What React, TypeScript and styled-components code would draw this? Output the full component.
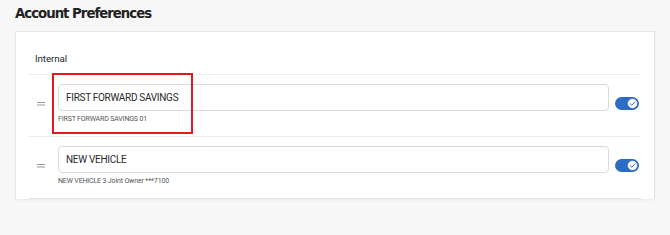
import React from "react";
import styled, { createGlobalStyle } from "styled-components";

const GlobalStyle = createGlobalStyle`
  html, body {
    margin: 0;
    padding: 0;
    background: #f7f7f7;
    font-family: Roboto, "Liberation Sans", Arial, sans-serif;
  }
`;

const Page = styled.div`
  width: 670px;
  height: 235px;
  padding: 5px 15px 0;
  box-sizing: border-box;
  background: #f7f7f7;
`;

const Title = styled.h1`
  margin: 0 0 8px;
  font-family: "DejaVu Sans", sans-serif;
  font-size: 13.3px;
  line-height: 18px;
  font-weight: 700;
  color: #222;
  letter-spacing: -1px;
`;

const Card = styled.div`
  background: #fff;
  border: 1px solid #e6e6e6;
  border-bottom: none;
  box-shadow: 0 1px 2px rgba(0, 0, 0, 0.06);
  padding: 0 13px;
`;

const Header = styled.div`
  padding: 20px 6px 9px;
  font-size: 9.8px;
  line-height: 13px;
  color: #2a2a2a;
  letter-spacing: -0.1px;
`;

const Row = styled.div<{ $last?: boolean }>`
  position: relative;
  display: flex;
  align-items: center;
  border-top: 1px solid #ececec;
  border-bottom: ${(p) => (p.$last ? "1px solid #e4e4e4" : "none")};
  padding: 9px 2px 13px 0;
`;

const Handle = styled.div`
  width: 29px;
  display: flex;
  align-items: center;
  padding-left: 8px;
  box-sizing: border-box;
`;

const Body = styled.div`
  flex: 1;
  display: flex;
  flex-direction: column;
  gap: 4px;
`;

const Input = styled.div`
  height: 27px;
  box-sizing: border-box;
  border: 1px solid #dadada;
  border-radius: 4px;
  padding: 0 7px;
  display: flex;
  align-items: center;
  font-size: 10px;
  color: #2a2a2a;
  letter-spacing: -0.3px;
`;

const Sub = styled.div`
  font-size: 7px;
  line-height: 8px;
  color: #555;
  letter-spacing: -0.15px;
`;

const Toggle = styled.div`
  margin-left: 6px;
  width: 24px;
  height: 13px;
  border-radius: 7px;
  background: #2d6cc5;
  display: flex;
  align-items: center;
  justify-content: flex-end;
  padding-right: 1px;
  box-sizing: border-box;
`;

const Highlight = styled.div`
  position: absolute;
  left: 23px;
  top: -2px;
  width: 141px;
  height: 61px;
  border: 2px solid #e3191f;
  box-sizing: border-box;
  pointer-events: none;
`;

const HandleIcon = () => (
  <svg width="8" height="4" viewBox="0 0 8 4">
    <rect x="0" y="0" width="8" height="1" fill="#9a9a9a" />
    <rect x="0" y="2.5" width="8" height="1" fill="#9a9a9a" />
  </svg>
);

const Knob = () => (
  <svg width="11" height="11" viewBox="0 0 11 11">
    <circle cx="5.5" cy="5.5" r="5" fill="#fff" stroke="#2d6cc5" strokeWidth="0.8" />
    <path d="M3.1 5.6 L4.8 7.2 L7.9 3.9" fill="none" stroke="#2d6cc5" strokeWidth="1" strokeLinecap="round" strokeLinejoin="round" />
  </svg>
);

const accounts = [
  { name: "FIRST FORWARD SAVINGS", detail: "FIRST FORWARD SAVINGS 01", highlight: true },
  { name: "NEW VEHICLE", detail: "NEW VEHICLE 3 Joint Owner ***7100", highlight: false },
];

export default function App() {
  return (
    <>
      <GlobalStyle />
      <Page>
        <Title>Account Preferences</Title>
        <Card>
          <Header>Internal</Header>
          {accounts.map((a, i) => (
            <Row key={a.name} $last={i === accounts.length - 1}>
              <Handle>
                <HandleIcon />
              </Handle>
              <Body>
                <Input>{a.name}</Input>
                <Sub>{a.detail}</Sub>
              </Body>
              <Toggle>
                <Knob />
              </Toggle>
              {a.highlight && <Highlight />}
            </Row>
          ))}
        </Card>
      </Page>
    </>
  );
}
